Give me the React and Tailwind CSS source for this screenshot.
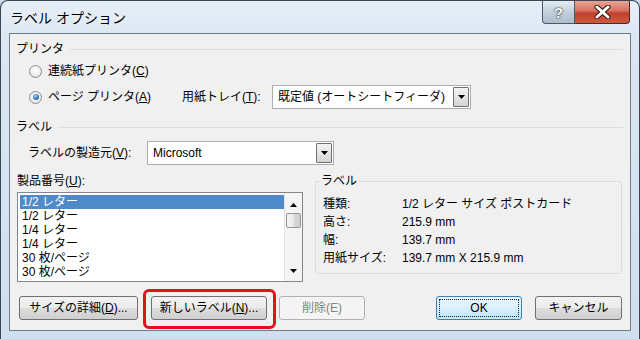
function Radio({ checked }) {
  return (
    <span className="relative flex h-[13px] w-[13px] items-center justify-center rounded-full border border-[#8f8f8f] bg-[radial-gradient(circle_at_50%_40%,#ffffff_0%,#f2f2f2_45%,#d6d6d6_100%)]">
      {checked && (
        <span className="h-[6px] w-[6px] rounded-full bg-[radial-gradient(circle_at_40%_35%,#a8d4f7_0%,#2d7bc6_55%,#174f8c_100%)]" />
      )}
    </span>
  )
}

function Combo({ value, className }) {
  return (
    <div className={`flex h-[24px] items-stretch border border-[#abadb3] bg-white p-px ${className}`}>
      <div className="flex flex-1 items-center px-[4px] text-[12px]">{value}</div>
      <div className="ml-[2px] flex w-[16px] items-center justify-center rounded-[1px] border border-[#707070] bg-gradient-to-b from-[#f2f2f2] via-[#e6e6e6] to-[#d2d2d2]">
        <svg width="7" height="4" viewBox="0 0 7 4">
          <path d="M0 0h7L3.5 4z" fill="#000" />
        </svg>
      </div>
    </div>
  )
}

function Button({ children, className = '', focused, disabled }) {
  const base = 'flex h-[24px] items-center justify-center rounded-[3px] border text-[12px]'
  if (disabled) {
    return <div className={`${base} border-[#adb2b5] bg-[#f4f4f4] text-[#838383] ${className}`}>{children}</div>
  }
  if (focused) {
    return (
      <div className={`${base} border-[#3c7fb1] bg-gradient-to-b from-[#eaf6fd] via-[#d9f0fc] to-[#bee6fd] p-[2px] ${className}`}>
        <div className="flex h-full w-full items-center justify-center border border-dotted border-[#222]">{children}</div>
      </div>
    )
  }
  return (
    <div className={`${base} border-[#707070] bg-[linear-gradient(#f2f2f2_0%,#ebebeb_50%,#dddddd_50%,#cfcfcf_100%)] ${className}`}>
      {children}
    </div>
  )
}

const items = ['1/2 レター', '1/2 レター', '1/4 レター', '1/4 レター', '30 枚/ページ', '30 枚/ページ']

const details = [
  ['種類:', '1/2 レター サイズ ポストカード'],
  ['高さ:', '215.9 mm'],
  ['幅:', '139.7 mm'],
  ['用紙サイズ:', '139.7 mm X 215.9 mm'],
]

export default function App() {
  return (
    <div className="h-[339px] w-[640px] overflow-hidden bg-[#c9dbee] font-['Liberation_Sans','Noto_Sans_CJK_JP',sans-serif] text-black">
      <div className="flex h-[339px] w-[640px] flex-col rounded-t-[8px] border border-b-0 border-[#3d4652] bg-[linear-gradient(180deg,#e6eef7_0%,#dbe6f2_12%,#cfdff0_100%)]">
        {/* Title bar */}
        <div className="flex h-[32px] items-start">
          <div className="ml-[9px] mt-[8px] text-[14px] leading-[18px] [text-shadow:0_0_6px_#ffffff]">ラベル オプション</div>
          <div className="ml-auto mr-[9px] flex h-[23px]">
            <div className="flex w-[33px] items-center justify-center rounded-bl-[4px] border border-t-0 border-[#4b5866] bg-gradient-to-b from-[#e4ebf2] via-[#c4d0dc] to-[#aebdcc] text-[15px] font-bold leading-none text-white [text-shadow:0_0_1px_#1d2a38,0_0_2px_#1d2a38]">
              ?
            </div>
            <div className="flex w-[55px] items-center justify-center rounded-br-[4px] border border-l-0 border-t-0 border-[#4b2a26] bg-[linear-gradient(#e8a493_0%,#d5705d_45%,#c0402c_55%,#cf5a3f_100%)]">
              <svg width="17" height="14" viewBox="0 0 17 14">
                <path d="M3 2l11 10M14 2L3 12" stroke="#2b1512" strokeWidth="5" strokeLinecap="round" />
                <path d="M3 2l11 10M14 2L3 12" stroke="#ffffff" strokeWidth="3" strokeLinecap="round" />
              </svg>
            </div>
          </div>
        </div>

        {/* Client area */}
        <div className="relative mx-[8px] flex h-[298px] flex-col border border-[#6d7d8e] bg-[#f0f0f0]">
          {/* プリンタ group */}
          <div className="mt-[8px] flex h-[14px] items-center pl-[6px] pr-[7px] text-[12px]">
            <span>プリンタ</span>
            <div className="ml-[6px] h-px flex-1 bg-[#d5dfe5]" />
          </div>
          <div className="mt-[5px] flex h-[20px] items-center pl-[19px] text-[12px]">
            <Radio />
            <span className="ml-[6px]">連続紙プリンタ(<span className="underline">C</span>)</span>
          </div>
          <div className="mt-[4px] flex h-[24px] items-center pl-[19px] text-[12px]">
            <div className="flex w-[153px] items-center">
              <Radio checked />
              <span className="ml-[6px]">ページ プリンタ(<span className="underline">A</span>)</span>
            </div>
            <span className="w-[90px]">用紙トレイ(<span className="underline">T</span>):</span>
            <Combo value="既定値 (オートシートフィーダ)" className="w-[199px]" />
          </div>

          {/* ラベル group */}
          <div className="mt-[11px] flex h-[14px] items-center pl-[6px] pr-[7px] text-[12px]">
            <span>ラベル</span>
            <div className="ml-[6px] h-px flex-1 bg-[#d5dfe5]" />
          </div>
          <div className="mt-[7px] flex h-[24px] items-center pl-[18px] text-[12px]">
            <span className="w-[119px]">ラベルの製造元(<span className="underline">V</span>):</span>
            <Combo value="Microsoft" className="w-[187px]" />
          </div>

          <div className="mt-[9px] flex pl-[7px] pr-[8px]">
            {/* Product list */}
            <div className="flex w-[286px] flex-col">
              <div className="flex h-[14px] items-center text-[12px]">製品番号(<span className="underline">U</span>):</div>
              <div className="mt-[4px] flex h-[90px] border border-[#828790] bg-white">
                <div className="flex flex-1 flex-col pl-[2px] pt-[2px]">
                  {items.map((it, i) => (
                    <div
                      key={i}
                      className={`flex h-[14px] items-center pl-[2px] text-[12px] leading-none ${i === 0 ? 'bg-[#4f8bcb] text-white' : ''}`}
                    >
                      {it}
                    </div>
                  ))}
                </div>
                <div className="flex w-[18px] flex-col items-center border-l border-[#e3e3e3] bg-[#f4f4f4] py-[4px]">
                  <svg width="7" height="4" viewBox="0 0 7 4" className="mt-[6px]">
                    <path d="M3.5 0L7 4H0z" fill="#000" />
                  </svg>
                  <div className="mt-[6px] h-[15px] w-[15px] rounded-[2px] border border-[#959595] bg-[linear-gradient(90deg,#f3f3f3_0%,#e8e8e8_50%,#d6d6d6_51%,#cfcfcf_100%)]" />
                  <svg width="7" height="4" viewBox="0 0 7 4" className="mt-auto mb-[4px]">
                    <path d="M0 0h7L3.5 4z" fill="#000" />
                  </svg>
                </div>
              </div>
            </div>

            {/* Label details group */}
            <div className="ml-[12px] flex-1 pt-[7px]">
              <div className="relative h-[93px] rounded-[3px] border border-[#d5dfe5] px-[7px] pt-[13px]">
                <span className="absolute left-[4px] top-[-8px] bg-[#f0f0f0] px-[1px] text-[12px] leading-[14px]">ラベル</span>
                {details.map(([k, v]) => (
                  <div key={k} className="flex h-[18px] items-center text-[12px]">
                    <span className="w-[79px]">{k}</span>
                    <span>{v}</span>
                  </div>
                ))}
              </div>
            </div>
          </div>

          {/* Buttons */}
          <div className="mt-[14px] flex pl-[9px] pr-[8px]">
            <Button className="w-[119px]">サイズの詳細(<span className="underline">D</span>)...</Button>
            <div className="relative ml-[13px]">
              <Button className="w-[116px]">新しいラベル(<span className="underline">N</span>)...</Button>
              <div className="pointer-events-none absolute left-[-8px] top-[-7px] h-[40px] w-[133px] rounded-[6px] border-[3px] border-[#e4101c]" />
            </div>
            <Button disabled className="ml-[12px] w-[86px]">削除(E)</Button>
            <Button focused className="ml-auto w-[86px]">OK</Button>
            <Button className="ml-[13px] w-[87px]">キャンセル</Button>
          </div>
        </div>
      </div>
    </div>
  )
}
